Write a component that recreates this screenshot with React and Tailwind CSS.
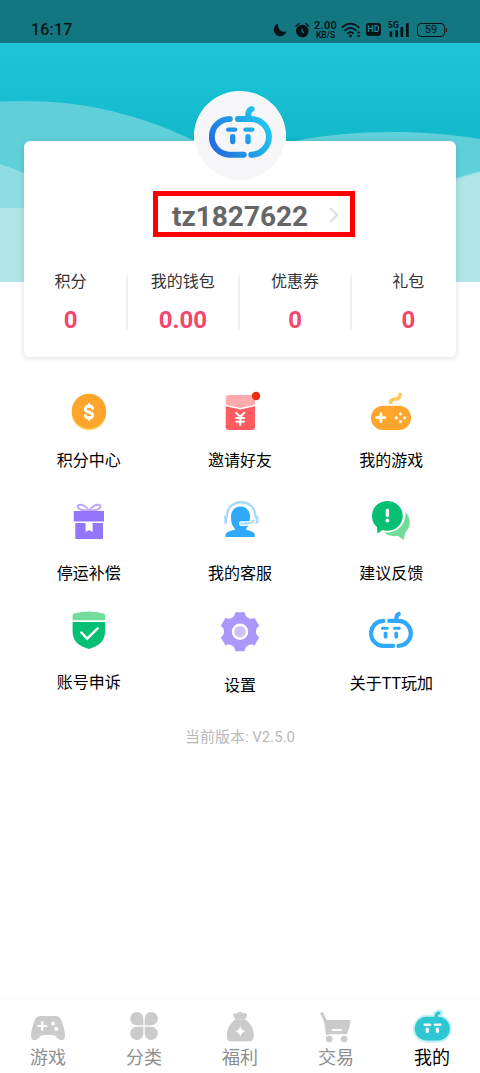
import React from 'react';

const LogoShape = ({ className, color }) => (
  <svg className={className} viewBox="0 0 63 54" fill="none" stroke={color} strokeLinecap="round">
    <g strokeWidth="6">
      <path d="M20.7 14 A17.85 17.85 0 0 0 20.7 49.7 H34.7" />
      <path d="M29 14 H41.8 A17.85 17.85 0 0 1 42.3 49.7" />
      <path d="M39.3 13 V10 Q39.3 5.2 42.6 4" />
    </g>
    <path strokeWidth="4.4" d="M19.2 24.6 H26.1 M36.5 24.6 H43.4" />
    <path strokeWidth="5.4" d="M23.7 31.7 V36.6 M39 31.7 V36.6" />
  </svg>
);

const Icon = ({ children }) => (
  <svg className="h-11 w-11" viewBox="0 0 44 44" fill="none">
    {children}
  </svg>
);

const CoinIcon = () => (
  <Icon>
    <circle cx="22" cy="22.8" r="17.3" fill="#fdc750" />
    <circle cx="22" cy="21" r="17.2" fill="#fda52d" />
    <g stroke="#fff" strokeWidth="2.9" strokeLinecap="round" strokeLinejoin="round">
      <path d="M25.6 18.2 C25 16.7 24 16.3 22 16.3 C17.2 16.3 17.2 21.2 21.4 22 C27.2 23.1 26.6 27.9 22 27.9 C19.8 27.9 18.6 27.2 18.1 25.4" />
      <path d="M22 14.8 V16.3 M22 27.9 V29.4" />
    </g>
  </Icon>
);

const EnvelopeIcon = () => (
  <Icon>
    <path d="M7.7 8 Q7.7 5 10.7 5 H34 Q37 5 37 8 V14.7 L22.3 18 L7.7 14.7Z" fill="#ffabad" />
    <path d="M7.7 16.3 L22.3 19.4 L37 16.3 V37 Q37 40 34 40 H10.7 Q7.7 40 7.7 37Z" fill="#ff5b60" />
    <path
      d="M18.3 22.9 L22.2 27 L26 22.9 M22.2 27 V34.8 M18.4 28 H26 M18.4 31.6 H26"
      stroke="#fff"
      strokeWidth="2.2"
      strokeLinecap="round"
    />
    <circle cx="38" cy="6" r="4.2" fill="#ee2b0e" />
  </Icon>
);

const GamepadIcon = () => (
  <Icon>
    <path d="M21.8 14 C21.3 10.5 22.5 9.4 25.5 9.2 C29.5 9 31.2 8 31.3 2.8" stroke="#fdc75c" strokeWidth="3.6" />
    <rect x="2" y="15.7" width="40" height="24.3" rx="12" fill="#fda52d" />
    <path d="M7.8 27.7 H15.8 M11.8 23.7 V31.7" stroke="#fff" strokeWidth="2.8" strokeLinecap="round" />
    <g fill="#fff">
      <circle cx="27.3" cy="27.8" r="1.6" />
      <circle cx="35.6" cy="27.8" r="1.6" />
      <circle cx="31.5" cy="24" r="1.6" />
      <circle cx="31.5" cy="31.6" r="1.6" />
    </g>
  </Icon>
);

const GiftIcon = () => (
  <Icon>
    <g stroke="#bda7fb" strokeWidth="2">
      <path d="M21.8 11.8 C20 7.5 15.5 5.3 11.8 6 C9.3 6.8 11.3 10 14.5 10.7 C17 11.5 19.5 11.8 21.8 11.8Z" />
      <path d="M22.4 11.8 C24.2 7.5 28.7 5.3 32.4 6 C34.9 6.8 32.9 10 29.7 10.7 C27.2 11.5 24.7 11.8 22.4 11.8Z" />
    </g>
    <path d="M6.7 12 H37 V22.6 H6.7Z M8.3 24 H36 V40 H8.3Z" fill="#9476fb" />
    <path d="M18.6 24 H25.6 V33 L22.1 31 L18.6 33Z" fill="#fff" />
  </Icon>
);

const ServiceIcon = () => (
  <Icon>
    <path
      d="M22.5 7.6 C28 7.6 32 11.5 32 17.4 C32 23 31 26.5 28.2 29.3 V31 C34 31.8 37 33.5 37 37 Q37 38 36 38 H8.3 Q7.3 38 7.3 37 C7.3 33.5 11 31.8 16.8 31 V29.3 C14 26.5 13 23 13 17.4 C13 11.5 17 7.6 22.5 7.6Z"
      fill="#2fa9fc"
    />
    <path d="M8.8 18.5 C8.8 9.5 14 3.2 23 3.2 C32 3.2 37.5 9.5 37.5 18.5" stroke="#a6d9fd" strokeWidth="2.4" />
    <path d="M7.7 16.5 V24.4 M38.8 16.5 V24.4" stroke="#a6d9fd" strokeWidth="3" />
    <path d="M23.2 24.6 H28 Q33.8 24.4 36 21.6" stroke="#fff" strokeWidth="4.6" strokeLinecap="round" />
    <path d="M23.3 24.6 H28 Q33.5 24.4 35.6 21.8" stroke="#a6d9fd" strokeWidth="2.2" strokeLinecap="round" />
  </Icon>
);

const FeedbackIcon = () => (
  <Icon>
    <path
      d="M36.3 13 C42.2 18.5 42.3 28.3 36.4 33.3 L34.8 41 L28.7 36.8 C23.5 37.8 18.5 36.6 15 33.6 C28 34 37.5 26 36.3 13Z"
      fill="#72dd9a"
    />
    <path
      d="M18.4 2 C27 2 33.7 8.5 33.7 16.9 C33.7 25.3 27 31.7 18.4 31.7 C16.5 31.7 15 31.5 13.6 31 L8.4 34.6 L8 28.3 C5 25.5 3 21.7 3 16.9 C3 8.5 9.8 2 18.4 2Z"
      fill="#05bf72"
    />
    <path d="M18.4 11.4 V16.4" stroke="#fff" strokeWidth="3.4" strokeLinecap="round" />
    <circle cx="18.4" cy="21.5" r="1.9" fill="#fff" />
  </Icon>
);

const ShieldIcon = () => (
  <Icon>
    <path d="M5.6 6.4 Q5.6 4.8 7.2 4.5 Q22 .3 36.4 4.5 Q38 4.8 38 6.4 V11.3 H5.6Z" fill="#72dd9a" />
    <path d="M5.6 13 H38 V23 C38 32 31.5 37.5 21.8 39.9 C12.1 37.5 5.6 32 5.6 23Z" fill="#05bf72" />
    <path d="M14.3 23.5 L20.2 29.7 L30.6 19.4" stroke="#fff" strokeWidth="2.4" strokeLinecap="round" />
  </Icon>
);

const GearIcon = () => (
  <Icon>
    <path
      transform="translate(22 22.7)"
      d="M-4.8 -19.5 H4.8 A6.4 6.4 0 0 0 14.5 -13.9 L19.3 -5.6 A6.4 6.4 0 0 0 19.3 5.6 L14.5 13.9 A6.4 6.4 0 0 0 4.8 19.5 H-4.8 A6.4 6.4 0 0 0 -14.5 13.9 L-19.3 5.6 A6.4 6.4 0 0 0 -19.3 -5.6 L-14.5 -13.9 A6.4 6.4 0 0 0 -4.8 -19.5Z"
      fill="#ab96fb"
    />
    <circle cx="22" cy="22.7" r="8.2" fill="#fff" />
    <circle cx="22" cy="22.7" r="5.8" fill="#cfc0fc" />
  </Icon>
);

const AboutIcon = () => (
  <div className="flex h-11 w-11 items-start pt-0.5">
    <LogoShape className="h-[38px] w-11" color="#30a9fc" />
  </div>
);

const stats = [
  { label: '积分', value: '0' },
  { label: '我的钱包', value: '0.00' },
  { label: '优惠券', value: '0' },
  { label: '礼包', value: '0' },
];

const menu = [
  { label: '积分中心', icon: <CoinIcon />, className: 'h-[109px] gap-[15px]' },
  { label: '邀请好友', icon: <EnvelopeIcon />, className: 'h-[109px] gap-[15px]' },
  { label: '我的游戏', icon: <GamepadIcon />, className: 'h-[109px] gap-[15px]' },
  { label: '停运补偿', icon: <GiftIcon />, className: 'h-[110px] gap-[19px]' },
  { label: '我的客服', icon: <ServiceIcon />, className: 'h-[110px] gap-[19px]' },
  { label: '建议反馈', icon: <FeedbackIcon />, className: 'h-[110px] gap-[19px]' },
  { label: '账号申诉', icon: <ShieldIcon />, className: 'h-[100px] gap-[18px]' },
  { label: '设置', icon: <GearIcon />, className: 'h-[100px] gap-[21px]' },
  { label: '关于TT玩加', icon: <AboutIcon />, className: 'h-[100px] gap-[19px]' },
];

const TabIcon = ({ children }) => (
  <svg className="h-9 w-10" viewBox="0 0 40 36" fill="#cbcbcb">
    {children}
  </svg>
);

const tabs = [
  {
    label: '游戏',
    icon: (
      <TabIcon>
        <path d="M12 8 H28 Q31.5 8 33 11.5 C35 16.5 37 23 37 28 C37 32.5 33.5 33.5 30.5 31 C28.5 29.3 27 27 24.5 27 H15.5 C13 27 11.5 29.3 9.5 31 C6.5 33.5 3 32.5 3 28 C3 23 5 16.5 7 11.5 Q8.5 8 12 8Z" />
        <path d="M10.2 18 H18.2 M14.2 14 V22" stroke="#fff" strokeWidth="2.2" strokeLinecap="round" />
        <circle cx="25" cy="15.5" r="2" fill="#fff" />
        <circle cx="28.3" cy="21" r="2" fill="#fff" />
      </TabIcon>
    ),
  },
  {
    label: '分类',
    icon: (
      <TabIcon>
        <path d="M12.8 4 A6.6 6.6 0 0 1 19.4 10.6 V17.2 H12.8 A6.6 6.6 0 0 1 12.8 4Z" />
        <path d="M27.3 4 A6.6 6.6 0 0 0 20.7 10.6 V17.2 H27.3 A6.6 6.6 0 0 0 27.3 4Z" />
        <path d="M12.8 32 A6.6 6.6 0 0 0 19.4 25.4 V18.8 H12.8 A6.6 6.6 0 0 0 12.8 32Z" />
        <path d="M27.3 32 A6.6 6.6 0 0 1 20.7 25.4 V18.8 H27.3 A6.6 6.6 0 0 1 27.3 32Z" />
      </TabIcon>
    ),
  },
  {
    label: '福利',
    icon: (
      <TabIcon>
        <path d="M13.5 8 C12.5 5.5 15 4.5 16.8 5.8 C18 3.5 21.5 3.2 23 5.5 C25.5 4.2 28 6 26.8 8.2 L25 11.8 H15.5Z" />
        <path d="M15 11.7 H25.5 C30.5 15.5 34 20.5 33.8 27.5 C33.7 31.5 32.2 33.3 29.5 33.3 H10.8 C8 33.3 6.8 31.5 6.8 27.5 C6.8 20.5 10 15.5 15 11.7Z" />
        <path d="M20.3 17.7 Q21 22.2 25.5 23.2 Q21 24.2 20.3 28.7 Q19.6 24.2 15.1 23.2 Q19.6 22.2 20.3 17.7Z" fill="#fff" />
      </TabIcon>
    ),
  },
  {
    label: '交易',
    icon: (
      <TabIcon>
        <path d="M6 5.5 L9.5 13 L11.3 25.5" fill="none" stroke="#cbcbcb" strokeWidth="3" strokeLinecap="round" />
        <path d="M8.5 12 H33.5 Q35 12 34.6 13.5 L32.2 23.5 Q31.5 26.2 29 26.2 H12.5 Q10.5 26.2 10.2 24Z" />
        <path d="M16.5 22 H25" stroke="#fff" strokeWidth="1.8" strokeLinecap="round" />
        <circle cx="13.2" cy="31" r="3.3" />
        <circle cx="28.2" cy="31" r="3.3" />
      </TabIcon>
    ),
  },
  {
    label: '我的',
    active: true,
    icon: (
      <TabIcon>
        <g fill="#c3f1f3" stroke="#c3f1f3" strokeLinecap="round">
          <rect x="1" y="6.8" width="38.5" height="28" rx="14" stroke="none" />
          <path d="M24.5 9 Q23.5 5.5 27.5 5" strokeWidth="7.4" />
        </g>
        <rect x="2.8" y="8.7" width="35" height="23.8" rx="11.8" fill="#2fc6d4" />
        <path d="M24.3 10 Q23.6 5.5 27 5" fill="none" stroke="#2fc6d4" strokeWidth="3.2" strokeLinecap="round" />
        <path d="M12.7 16.7 H18 M22.9 16.7 H28.2" stroke="#fff" strokeWidth="2.4" strokeLinecap="round" />
        <path d="M15.2 21.2 V23.4 M25.4 21.2 V23.4" stroke="#fff" strokeWidth="3.2" strokeLinecap="round" />
      </TabIcon>
    ),
  },
];

const StatusBar = () => (
  <div className="flex h-[43px] items-center bg-black/40 pt-4 pl-[31px] text-[#071317]">
    <span className="w-[242px] text-[16px] leading-none font-medium tracking-[0.2px]">16:17</span>
    <svg className="h-4 w-[14px]" viewBox="0 0 14 16">
      <path d="M5.3 1.5 A6.5 6.5 0 1 0 13.5 9.5 A6.5 6.5 0 0 1 5.3 1.5Z" fill="currentColor" />
    </svg>
    <svg className="ml-2 h-4 w-[15px]" viewBox="0 0 15 16">
      <circle cx="7.3" cy="9" r="6.3" fill="currentColor" />
      <path d="M1 4 L4 1.5 M13.6 4 L10.6 1.5" stroke="currentColor" strokeWidth="1.3" strokeLinecap="round" />
      <path d="M7 6.5 V9 L8.8 11" stroke="#11757f" strokeWidth="1.3" fill="none" />
    </svg>
    <div className="ml-1 flex w-[23px] flex-col items-center font-medium">
      <span className="text-[11px] leading-[10px] font-semibold tracking-[0.2px]">2.00</span>
      <span className="text-[8.5px] leading-[8px] font-semibold">KB/S</span>
    </div>
    <svg className="ml-1 h-4 w-[21px]" viewBox="0 0 21 16" fill="none" stroke="currentColor" strokeWidth="1.7" strokeLinecap="round">
      <path d="M1.2 5.3 Q9.5 -2 17.8 5.3 M4 8.3 Q9.5 3.6 15 8.3 M6.8 11.2 Q9.5 9 12.2 11.2" />
      <circle cx="9.5" cy="14" r=".6" />
      <path d="M15.7 11.3 L17.7 9 L19.7 11.3Z M15.7 13.2 L17.7 15.5 L19.7 13.2Z" fill="currentColor" stroke="none" />
    </svg>
    <span className="ml-1 flex h-[13px] w-[15px] items-center justify-center rounded-[3px] bg-[#071317] text-[9px] leading-none font-medium text-[#1b93a0]">
      HD
    </span>
    <svg className="ml-1.5 h-[17px] w-6" viewBox="0 0 24 17" fill="currentColor">
      <text x="1" y="7.2" fontSize="8.5" fontWeight="700">
        5G
      </text>
      <path d="M2.5 10.5 h2.7 V16 h-2.7Z M8.2 9.3 h2.7 V16 h-2.7Z M13.5 6 h2.7 V16 h-2.7Z M19 2.3 h2.7 V16 h-2.7Z" />
    </svg>
    <div className="ml-1.5 flex h-[14px] w-7 items-center justify-center rounded-[4px] border border-[#071317] text-[11px] leading-none">
      59
    </div>
    <div className="ml-px h-1 w-px bg-[#071317]"></div>
  </div>
);

const Waves = () => (
  <svg className="col-start-1 row-start-1 h-[282px] w-full" viewBox="0 0 480 282" preserveAspectRatio="none">
    <defs>
      <linearGradient id="sky" x1="0" y1="0" x2="0" y2="1">
        <stop offset="0.15" stopColor="#1ec6d8" />
        <stop offset="0.5" stopColor="#13b8cb" />
      </linearGradient>
    </defs>
    <rect width="480" height="282" fill="url(#sky)" />
    <path d="M0 101.5 C70 98 130 110 193 140 L240 165 L295 141 C350 130 420 129 480 139 V282 H0Z" fill="#5fd0da" />
    <path d="M0 164 Q12 168 24 173 L240 220 L456 178 Q468 174 480 171 V282 H0Z" fill="#8fdde3" />
    <path d="M0 208 L240 206 L456 180 Q468 175 480 172.5 V282 H0Z" fill="#b0e5e8" />
  </svg>
);

const ProfileCard = () => (
  <div className="mx-6 mt-[98px] flex h-[216px] flex-col items-center rounded-md bg-white shadow-[0_1px_6px_rgba(0,0,0,0.13)]">
    <div className="-mt-[50px] flex h-[90px] w-[92px] shrink-0 items-start justify-center rounded-[50%] border border-white bg-[#f6f6f8] pt-[13px]">
      <svg className="h-0 w-0">
        <defs>
          <linearGradient id="brand" gradientUnits="userSpaceOnUse" x1="8" y1="46" x2="56" y2="18">
            <stop offset="0" stopColor="#2370e0" />
            <stop offset="1" stopColor="#20c5ec" />
          </linearGradient>
        </defs>
      </svg>
      <LogoShape className="h-[54px] w-[63px]" color="url(#brand)" />
    </div>
    <button className="mt-2.5 ml-7 flex h-[46px] w-[202px] shrink-0 items-center border-[5px] border-[#fe0000] pt-1.5 pl-3.5">
      <span className="w-[157px] text-left text-[28px] leading-none font-bold text-[#666]">tz1827622</span>
      <svg className="-mt-1 h-4 w-2.5" viewBox="0 0 10 16" fill="none">
        <path d="M1 1 L8.3 8 L1 15" stroke="#dedede" strokeWidth="2.2" />
      </svg>
    </button>
    <div className="mt-[38px] grid w-[449px] shrink-0 grid-cols-4 divide-x-2 divide-[#f0f0f0]">
      {stats.map((item) => (
        <div key={item.label} className="flex h-[55px] flex-col items-center">
          <span className="mt-[-5px] text-[16px] leading-6 text-[#333]">{item.label}</span>
          <span className="mt-3.5 text-[24px] leading-6 font-bold text-[#f4476e]">{item.value}</span>
        </div>
      ))}
    </div>
  </div>
);

const App = () => {
  return (
    <div className="flex h-[1073px] w-full flex-col overflow-hidden bg-white font-[Roboto,'Noto_Sans_CJK_SC',sans-serif]">
      <header className="grid h-[357px] shrink-0 grid-cols-1 items-start">
        <Waves />
        <div className="z-10 col-start-1 row-start-1">
          <StatusBar />
          <ProfileCard />
        </div>
      </header>

      <main className="flex grow flex-col items-center pt-[33px]">
        <div className="grid w-[454px] grid-cols-3">
          {menu.map((item) => (
            <div key={item.label} className={`flex flex-col items-center ${item.className}`}>
              {item.icon}
              <span className="text-[16px] leading-6 text-black">{item.label}</span>
            </div>
          ))}
        </div>
        <p className="mt-4 text-[15px] leading-6 text-[#b8b8b8]">当前版本: V2.5.0</p>
      </main>

      <nav className="grid h-[73px] shrink-0 grid-cols-5 bg-white pt-2 shadow-[0_-1px_6px_rgba(0,0,0,0.03)]">
        {tabs.map((tab) => (
          <div key={tab.label} className="flex flex-col items-center gap-0.5">
            {tab.icon}
            <span className={`text-[18px] leading-6 ${tab.active ? 'text-black' : 'text-[#8f8f8f]'}`}>{tab.label}</span>
          </div>
        ))}
      </nav>
    </div>
  );
};

export default App;
